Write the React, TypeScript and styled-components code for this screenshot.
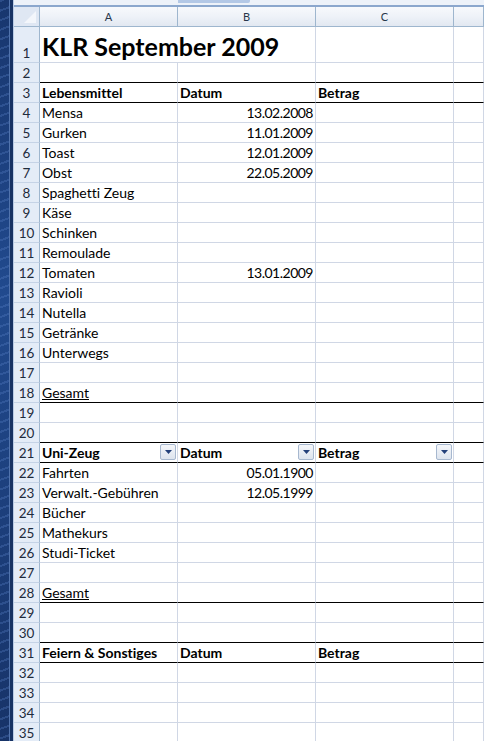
import React from "react";
import styled, { createGlobalStyle } from "styled-components";

const GlobalStyle = createGlobalStyle`
  html, body {
    margin: 0;
    padding: 0;
    width: 484px;
    height: 741px;
    overflow: hidden;
    background: #ffffff;
    font-family: Lato, "Open Sans", sans-serif;
    font-variant-ligatures: none;
  }
`;

const GRID = "#d0d7e5";
const HEAD_LINE = "#9eb6ce";
const COLS = "26px 138px 138px 138px 1fr";

const Window = styled.div`
  display: flex;
  width: 484px;
  height: 741px;
  overflow: hidden;
`;

const Desktop = styled.div`
  flex: 0 0 9px;
  background:
    repeating-linear-gradient(160deg, rgba(90, 130, 200, 0.3) 0 2px, transparent 2px 9px),
    linear-gradient(180deg, #18366e 0%, #214a8e 40%, #173368 100%);
`;

const Frame = styled.div`
  flex: 0 0 3px;
  background: #173263;
  border-left: 1px solid #5274ad;
  border-right: 1px solid #b9cbe5;
`;

const Workbook = styled.div`
  flex: 1;
  display: flex;
  flex-direction: column;
  min-width: 0;
`;

const TopStrip = styled.div`
  height: 5px;
  flex: 0 0 auto;
  background: #edf2f9;
  border-bottom: 2px solid #8ba7cd;
  display: flex;
`;

const Grip = styled.div`
  margin-left: 164px;
  width: 72px;
  height: 3px;
  background: #b3c8e6;
  border-bottom-right-radius: 2px;
`;

const Row = styled.div<{ $h: number }>`
  display: grid;
  grid-template-columns: ${COLS};
  height: ${(p) => p.$h}px;
  flex: 0 0 auto;
`;

const ColHead = styled.div<{ $corner?: boolean }>`
  box-sizing: border-box;
  border-right: 1px solid ${HEAD_LINE};
  border-bottom: 1px solid ${HEAD_LINE};
  background: ${(p) =>
    p.$corner ? "#dfe7f3" : "linear-gradient(180deg, #f7f9fc 0%, #eef2f8 50%, #e2e8f1 100%)"};
  display: flex;
  align-items: center;
  justify-content: center;
  font-size: 11px;
  color: #27364a;
  position: relative;
`;

const RowHead = styled.div`
  box-sizing: border-box;
  background: #e4ecf7;
  border-right: 1px solid ${HEAD_LINE};
  border-bottom: 1px solid #c5d3e6;
  display: flex;
  align-items: flex-end;
  justify-content: center;
  padding-bottom: 1px;
  font-size: 13.5px;
  color: #1e2b3c;
`;

const Cell = styled.div<{
  $line?: boolean;
  $span?: number;
  $right?: boolean;
  $bold?: boolean;
  $title?: boolean;
}>`
  box-sizing: border-box;
  grid-column: span ${(p) => p.$span || 1};
  border-right: 1px solid ${GRID};
  border-bottom: 1px solid ${(p) => (p.$line ? "#000000" : GRID)};
  display: flex;
  align-items: ${(p) => (p.$title ? "center" : "flex-end")};
  justify-content: ${(p) => (p.$right ? "flex-end" : "space-between")};
  padding: ${(p) => (p.$title ? "2px 2px 0 2px" : "0 2px 1px 2px")};
  font-size: ${(p) => (p.$title ? 25 : 14)}px;
  font-weight: ${(p) => (p.$bold || p.$title ? 700 : 400)};
  letter-spacing: ${(p) => (p.$right ? "-0.5px" : "0")};
  color: #000000;
  white-space: nowrap;
  overflow: hidden;
`;

const Sum = styled.span`
  text-decoration: underline;
`;

const FilterButton = styled.span`
  box-sizing: border-box;
  width: 16px;
  height: 16px;
  margin: 0 -1px 0 0;
  align-self: center;
  border: 1px solid #a7b8cf;
  border-radius: 2px;
  background: linear-gradient(180deg, #f4f6fa 0%, #dde4ee 100%);
  display: flex;
  align-items: center;
  justify-content: center;
`;

const Corner = () => (
  <svg width="14" height="14" viewBox="0 0 14 14" style={{ position: "absolute", right: 2, bottom: 2 }}>
    <polygon points="13,1 13,13 1,13" fill="#f3f6fb" />
  </svg>
);

const Arrow = () => (
  <svg width="7" height="4" viewBox="0 0 7 4">
    <polygon points="0,0 7,0 3.5,4" fill="#23407a" />
  </svg>
);

type Line = {
  a?: string;
  b?: string;
  c?: string;
  bold?: boolean;
  sum?: boolean;
  filter?: boolean;
  line?: boolean;
};

const rows: Line[] = [
  { line: true },
  { a: "Lebensmittel", b: "Datum", c: "Betrag", bold: true, line: true },
  { a: "Mensa", b: "13.02.2008" },
  { a: "Gurken", b: "11.01.2009" },
  { a: "Toast", b: "12.01.2009" },
  { a: "Obst", b: "22.05.2009" },
  { a: "Spaghetti Zeug" },
  { a: "Käse" },
  { a: "Schinken" },
  { a: "Remoulade" },
  { a: "Tomaten", b: "13.01.2009" },
  { a: "Ravioli" },
  { a: "Nutella" },
  { a: "Getränke" },
  { a: "Unterwegs" },
  {},
  { a: "Gesamt", sum: true, line: true },
  {},
  { line: true },
  { a: "Uni-Zeug", b: "Datum", c: "Betrag", bold: true, filter: true, line: true },
  { a: "Fahrten", b: "05.01.1900" },
  { a: "Verwalt.-Gebühren", b: "12.05.1999" },
  { a: "Bücher" },
  { a: "Mathekurs" },
  { a: "Studi-Ticket" },
  {},
  { a: "Gesamt", sum: true, line: true },
  {},
  { line: true },
  { a: "Feiern & Sonstiges", b: "Datum", c: "Betrag", bold: true, line: true },
  {},
  {},
  {},
  {},
];

const HeaderCell = ({ text, filter }: { text?: string; filter?: boolean }) => (
  <>
    <span>{text}</span>
    {filter && (
      <FilterButton>
        <Arrow />
      </FilterButton>
    )}
  </>
);

export default function App() {
  return (
    <>
      <GlobalStyle />
      <Window>
        <Desktop />
        <Frame />
        <Workbook>
          <TopStrip>
            <Grip />
          </TopStrip>
          <Row $h={20}>
            <ColHead $corner>
              <Corner />
            </ColHead>
            <ColHead>A</ColHead>
            <ColHead>B</ColHead>
            <ColHead>C</ColHead>
            <ColHead />
          </Row>
          <Row $h={36}>
            <RowHead>1</RowHead>
            <Cell $span={2} $title>
              KLR September 2009
            </Cell>
            <Cell />
            <Cell />
          </Row>
          {rows.map((r, i) => {
            // Bold rows are the table heads; dates sit right-aligned in column B
            const isHead = !!r.bold;
            return (
              <Row $h={20} key={i}>
                <RowHead>{i + 2}</RowHead>
                <Cell $line={r.line} $bold={isHead}>
                  {r.sum ? <Sum>{r.a}</Sum> : <HeaderCell text={r.a} filter={r.filter} />}
                </Cell>
                <Cell $line={r.line} $bold={isHead} $right={!isHead}>
                  <HeaderCell text={r.b} filter={r.filter} />
                </Cell>
                <Cell $line={r.line} $bold={isHead}>
                  <HeaderCell text={r.c} filter={r.filter} />
                </Cell>
                <Cell $line={r.line} />
              </Row>
            );
          })}
        </Workbook>
      </Window>
    </>
  );
}
